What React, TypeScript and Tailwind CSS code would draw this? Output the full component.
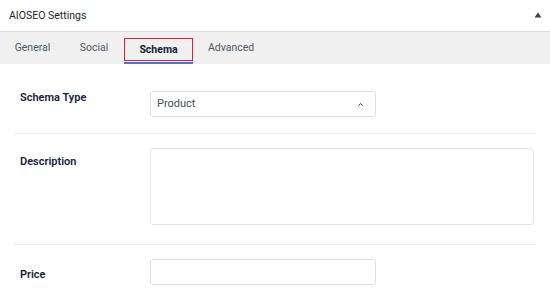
import { ChevronUp } from "lucide-react";

const tabs = [
  { label: "General", w: "w-[65px]" },
  { label: "Social", w: "w-[58px]" },
];

export default function App() {
  return (
    <div className="w-[550px] h-[297px] bg-white overflow-hidden font-['Roboto',sans-serif] text-[#141b38]">
      {/* Postbox header */}
      <div className="h-[31px] flex items-center justify-between pl-[9px] pr-[8px]">
        <span className="text-[10.5px] text-[#1d2327]">AIOSEO Settings</span>
        <svg width="8" height="6" viewBox="0 0 8 6" className="mt-[-1px]">
          <path d="M4 0.5 L7.5 5.5 L0.5 5.5 Z" fill="#3c434a" />
        </svg>
      </div>

      {/* Tabs */}
      <div className="h-[33px] bg-[#f0f0f1] border-t border-[#dcdcde] flex items-stretch">
        {tabs.map((t) => (
          <div key={t.label} className={`${t.w} flex items-center justify-center text-[10.5px] text-[#50575e]`}>
            {t.label}
          </div>
        ))}
        <div className="ml-[1px] w-[69px] border-b-[2px] border-[#4a74dc] flex flex-col">
          <div className="mt-[6px] h-[23px] border-[1.5px] border-[#e8202f] flex items-center justify-center text-[10.5px] font-bold text-[#141b38]">
            Schema
          </div>
        </div>
        <div className="pl-[15px] flex items-center text-[10.5px] text-[#50575e]">Advanced</div>
      </div>

      {/* Schema Type */}
      <div className="mx-[14px] pt-[27px] pb-[16px] border-b border-[#f0f0f1] flex items-start">
        <div className="w-[136px] pl-[6px] text-[11px] leading-[14px] font-semibold">Schema Type</div>
        <div className="w-[226px] h-[26px] border border-[#dfe1e6] rounded-[3px] flex items-center justify-between pl-[6px] pr-[11px]">
          <span className="text-[11px] text-[#434960]">Product</span>
          <ChevronUp className="w-[7px] h-[7px] text-[#141b38]" strokeWidth={3} />
        </div>
      </div>

      {/* Description */}
      <div className="mx-[14px] pt-[14px] pb-[19px] border-b border-[#f0f0f1] flex items-start">
        <div className="w-[136px] pl-[6px] mt-[7px] text-[11px] leading-[14px] font-semibold">Description</div>
        <div className="w-[384px] h-[77px] border border-[#e4e5e8] rounded-[3px]" />
      </div>

      {/* Price */}
      <div className="mx-[14px] pt-[14px] flex items-start">
        <div className="w-[136px] pl-[6px] mt-[9px] text-[11px] leading-[14px] font-semibold">Price</div>
        <div className="w-[226px] h-[26px] border border-[#dfe1e6] rounded-[3px]" />
      </div>
    </div>
  );
}
